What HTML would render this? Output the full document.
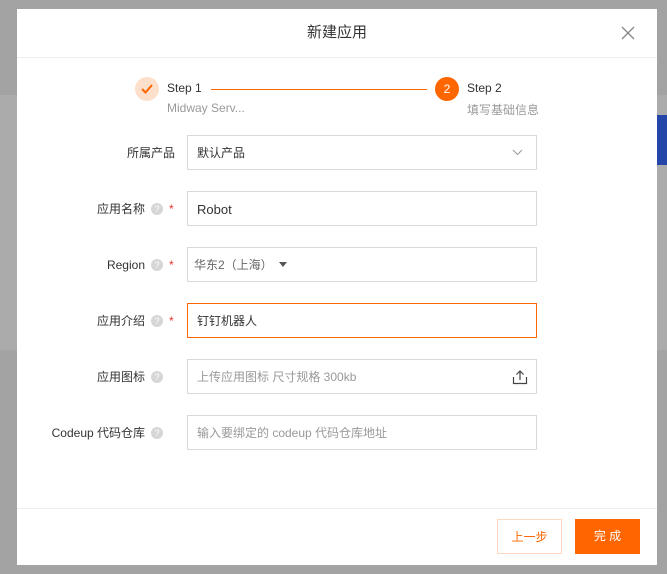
<!DOCTYPE html>
<html><head><meta charset="utf-8"><style>
body{margin:0;width:667px;height:574px;background:#a3a3a3;position:relative;overflow:hidden;font-family:"Liberation Sans","Noto Sans CJK SC",sans-serif;font-size:12px;color:#333}
.bg1{position:absolute;left:0;top:95px;width:667px;height:255px;background:#ababab}
.blue{position:absolute;left:657px;top:115px;width:10px;height:50px;background:#2446a8}
.modal{position:absolute;left:17px;top:9px;width:640px;height:556px;background:#fff}
.hd{height:48px;border-bottom:1px solid #eee;text-align:center;line-height:48px;font-size:15px;color:#333}
.x{position:absolute;right:22px;top:17px;width:14px;height:14px}
.ft{position:absolute;left:0;top:499px;width:640px;border-top:1px solid #eee}
.btn{position:absolute;top:510px;height:35px;width:65px;line-height:35px;text-align:center;font-size:12px}
.row{position:absolute;left:0;width:640px;height:35px}
.lbl{position:absolute;right:482px;top:0;height:35px;display:flex;align-items:center;white-space:nowrap;font-size:12px;color:#333}
.q{display:inline-block;width:12px;height:12px;border-radius:50%;background:#d6d6d6;color:#fff;font-size:9px;line-height:12px;text-align:center;margin-left:6px}
.star{color:#e33;margin-left:6px;width:6px}
.in{position:absolute;left:170px;top:0;width:350px;height:35px;border:1px solid #d9d9d9;line-height:35px;padding-left:9px;box-sizing:border-box;font-size:12px;color:#333}
.ph{color:#999}
</style></head><body>
<div class="bg1"></div><div class="blue"></div>
<div class="modal">
 <div class="hd">新建应用</div>
 <svg class="x" viewBox="0 0 14 14"><path d="M1 1L13 13M13 1L1 13" stroke="#888" stroke-width="1.3"/></svg>
 <div style="position:absolute;left:118px;top:68px;width:24px;height:24px;border-radius:50%;background:#fde0cc"></div>
 <svg style="position:absolute;left:123px;top:73px" width="14" height="14" viewBox="0 0 14 14"><path d="M2 7L5.5 10.5L12 3" stroke="#f60" stroke-width="2" fill="none"/></svg>
 <div style="position:absolute;left:150px;top:72px;font-size:12px;color:#333">Step 1</div>
 <div style="position:absolute;left:150px;top:92px;font-size:12px;color:#999">Midway Serv...</div>
 <div style="position:absolute;left:194px;top:80px;width:216px;height:1px;background:#f60"></div>
 <div style="position:absolute;left:418px;top:68px;width:24px;height:24px;border-radius:50%;background:#f60;color:#fff;text-align:center;line-height:24px;font-size:12px">2</div>
 <div style="position:absolute;left:450px;top:72px;font-size:12px;color:#333">Step 2</div>
 <div style="position:absolute;left:450px;top:92px;font-size:12px;color:#999">填写基础信息</div>

 <div class="row" style="top:126px"><div class="lbl">所属产品</div><div class="in">默认产品<svg style="position:absolute;right:13px;top:13px" width="11" height="7" viewBox="0 0 11 7"><path d="M1 1L5.5 5.5L10 1" stroke="#999" fill="none"/></svg></div></div>
 <div class="row" style="top:182px"><div class="lbl">应用名称<span class="q">?</span><span class="star">*</span></div><div class="in" style="font-size:13px">Robot</div></div>
 <div class="row" style="top:238px"><div class="lbl">Region<span class="q">?</span><span class="star">*</span></div><div class="in" style="padding-left:6px;color:#666">华东2（上海）<span style="display:inline-block;margin-left:6px;border-left:4px solid transparent;border-right:4px solid transparent;border-top:5px solid #555;vertical-align:2px"></span></div></div>
 <div class="row" style="top:294px"><div class="lbl">应用介绍<span class="q">?</span><span class="star">*</span></div><div class="in" style="border:1px solid #ff6600">钉钉机器人</div></div>
 <div class="row" style="top:350px"><div class="lbl">应用图标<span class="q">?</span><span style="margin-left:6px;width:6px"></span></div><div class="in ph">上传应用图标 尺寸规格 300kb<svg style="position:absolute;right:8px;top:9px" width="16" height="16" viewBox="0 0 16 16"><path d="M8 11V2M4.5 5.5L8 2L11.5 5.5M1.5 8V14.5H14.5V8" stroke="#444" stroke-width="1.2" fill="none"/></svg></div></div>
 <div class="row" style="top:406px"><div class="lbl">Codeup 代码仓库<span class="q">?</span><span style="margin-left:6px;width:6px"></span></div><div class="in ph">输入要绑定的 codeup 代码仓库地址</div></div>

 <div class="ft"></div>
 <div class="btn" style="left:480px;border:1px solid #fdd9bf;width:65px;height:35px;line-height:35px;box-sizing:border-box;color:#f60">上一步</div>
 <div class="btn" style="left:558px;background:#f60;color:#fff">完 成</div>
</div>
</body></html>
